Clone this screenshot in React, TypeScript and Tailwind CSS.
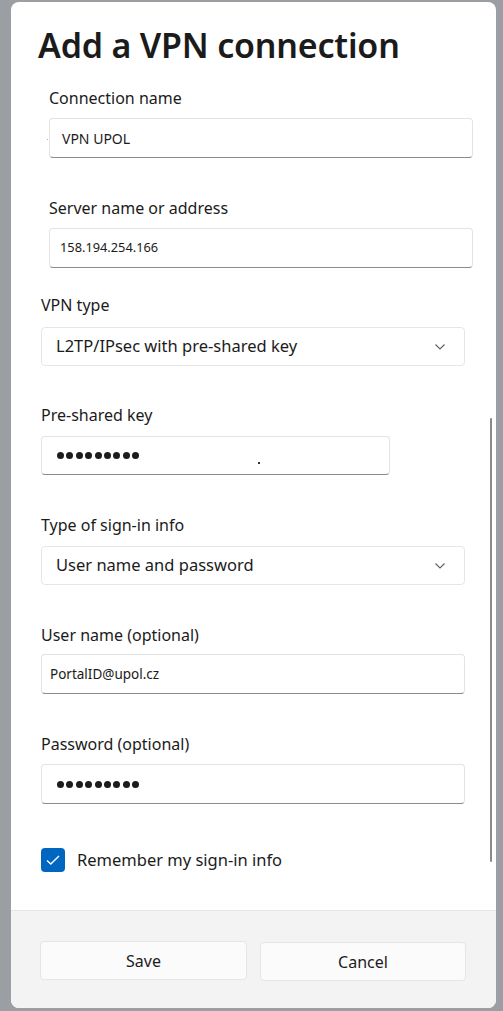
import React from "react";

const font = { fontFamily: '"Noto Sans", "Open Sans", sans-serif' };

function Label({ children, className = "" }: { children: React.ReactNode; className?: string }) {
  return (
    <div className={"h-[20px] text-[16px] leading-[20px] text-[#1b1b1b] " + className}>{children}</div>
  );
}

function Dots() {
  return (
    <div className="flex items-center gap-[2.4px]">
      {Array.from({ length: 9 }).map((_, i) => (
        <span key={i} className="block w-[7px] h-[7px] rounded-full bg-[#1c1c1c]" />
      ))}
    </div>
  );
}

function Chevron() {
  return (
    <svg width="12" height="8" viewBox="0 0 12 8" className="text-[#5f5f5f]">
      <polyline points="1.5,1.5 6,6 10.5,1.5" fill="none" stroke="currentColor" strokeWidth="1.1" />
    </svg>
  );
}

export default function App() {
  return (
    <div className="w-[503px] h-[1011px] bg-[#9b9ea2] pt-[2px] pl-[11px] overflow-hidden" style={font}>
      <div className="relative w-[485px] h-[1006px] bg-white rounded-[8px] overflow-hidden flex flex-col">
        <div className="flex-1 flex flex-col">
          <div className="pl-[27px] pt-[23px] h-[44px] text-[34px] leading-[40px] font-semibold text-[#1b1b1b] tracking-[-0.2px] whitespace-nowrap">
            Add a VPN connection
          </div>

          <Label className="mt-[42px] ml-[38px]">Connection name</Label>
          <div className="relative mt-[10px] ml-[38px] w-[424px] h-[40px] rounded-[4px] border border-[#e3e3e3] border-b-[#8c8c8c] flex items-center pl-[12px] text-[14px] text-[#1b1b1b]">
            VPN UPOL
            <span className="absolute left-[-3px] top-[20px] w-[1px] h-[1px] bg-[#d9a0a0]" />
          </div>

          <Label className="mt-[40px] ml-[38px]">Server name or address</Label>
          <div className="mt-[10px] ml-[38px] w-[424px] h-[40px] rounded-[4px] border border-[#e3e3e3] border-b-[#8c8c8c] flex items-center pl-[10px] text-[12.8px] text-[#1b1b1b]">
            158.194.254.166
          </div>

          <Label className="mt-[27px] ml-[30px]">VPN type</Label>
          <div className="mt-[12px] ml-[30px] w-[424px] h-[39px] rounded-[4px] border border-[#e6e6e6] flex items-center justify-between pl-[14px] pr-[18px] text-[16.5px] text-[#1b1b1b]">
            <span>L2TP/IPsec with pre-shared key</span>
            <Chevron />
          </div>

          <Label className="mt-[39px] ml-[30px]">Pre-shared key</Label>
          <div className="relative mt-[11px] ml-[30px] w-[349px] h-[39px] rounded-[4px] border border-[#e3e3e3] border-b-[#8c8c8c] flex items-center pl-[15px]">
            <Dots />
            <span className="absolute left-[216px] top-[25px] w-[2px] h-[2px] bg-[#333]" />
          </div>

          <Label className="mt-[40px] ml-[30px]">Type of sign-in info</Label>
          <div className="mt-[11px] ml-[30px] w-[424px] h-[39px] rounded-[4px] border border-[#e6e6e6] flex items-center justify-between pl-[14px] pr-[18px] text-[16.5px] text-[#1b1b1b]">
            <span>User name and password</span>
            <Chevron />
          </div>

          <Label className="mt-[40px] ml-[30px]">User name (optional)</Label>
          <div className="mt-[9px] ml-[30px] w-[424px] h-[40px] rounded-[4px] border border-[#e3e3e3] border-b-[#8c8c8c] flex items-center pl-[8px] text-[13.5px] text-[#1b1b1b]">
            PortalID@upol.cz
          </div>

          <Label className="mt-[40px] ml-[30px]">Password (optional)</Label>
          <div className="mt-[10px] ml-[30px] w-[424px] h-[40px] rounded-[4px] border border-[#e3e3e3] border-b-[#8c8c8c] flex items-center pl-[15px]">
            <Dots />
          </div>

          <div className="mt-[44px] ml-[30px] flex items-center gap-[12px]">
            <div className="w-[24px] h-[24px] rounded-[4px] bg-[#0067c0] flex items-center justify-center">
              <svg width="16" height="16" viewBox="0 0 16 16">
                <polyline points="2,8.5 5.8,12 14,4" fill="none" stroke="white" strokeWidth="1.4" />
              </svg>
            </div>
            <span className="text-[16.5px] text-[#1b1b1b]">Remember my sign-in info</span>
          </div>
        </div>

        <div className="h-[98px] shrink-0 bg-[#f3f3f3] border-t border-[#e5e5e5] flex pl-[29px] pt-[30px] gap-[13px]">
          <button className="w-[207px] h-[39px] rounded-[4px] bg-[#fbfbfb] border border-[#e5e5e5] text-[16px] text-[#1b1b1b]">
            Save
          </button>
          <button className="mt-[1px] w-[206px] h-[39px] rounded-[4px] bg-[#fbfbfb] border border-[#e5e5e5] text-[16px] text-[#1b1b1b]">
            Cancel
          </button>
        </div>

        <div className="absolute left-[479px] top-[416px] w-[2px] h-[444px] rounded-full bg-[#8a8a8a]" />
      </div>
    </div>
  );
}
